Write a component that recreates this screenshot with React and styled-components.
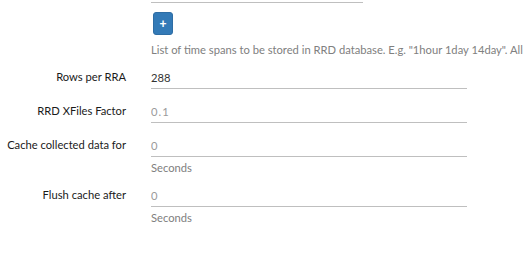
import React from "react";
import styled, { createGlobalStyle } from "styled-components";

const GlobalStyle = createGlobalStyle`
  html, body {
    margin: 0;
    padding: 0;
    background: #fff;
    overflow: hidden;
  }
  body {
    font-family: Lato, "Liberation Sans", sans-serif;
    font-size: 11.2px;
    color: #333;
  }
`;

const Form = styled.div`
  display: grid;
  grid-template-columns: 126px 316px;
  column-gap: 25px;
  width: 529px;
  margin-top: -20px;
`;

const Label = styled.label`
  text-align: right;
  line-height: 22px;
  color: #1a1a1a;
  white-space: nowrap;
`;

const Field = styled.div`
  display: flex;
  flex-direction: column;
  align-items: flex-start;
  margin-bottom: ${p => p.gap ?? 11}px;
  min-width: 0;
`;

const Input = styled.input`
  box-sizing: border-box;
  width: ${p => p.width ?? 316}px;
  height: 23px;
  padding: 0;
  border: 0;
  border-bottom: 1px solid #bfbfbf;
  font: inherit;
  color: #333;
  outline: none;
  background: transparent;

  &::placeholder {
    color: #9a9a9a;
    letter-spacing: ${p => p.spaced ? "1px" : "0"};
  }
`;

const AddButton = styled.button`
  margin: 9px 0 0 2px;
  width: 20px;
  height: 23px;
  padding: 0;
  border: 1px solid #2e6da4;
  border-radius: 3px;
  background: #337ab7;
  color: #fff;
  font: bold 12px "Liberation Sans", sans-serif;
  line-height: 18px;
  vertical-align: top;
`;

const Help = styled.div`
  margin-top: ${p => p.top ?? 2}px;
  color: #808080;
  white-space: nowrap;
  line-height: 17px;
`;

export default function App() {
  return (
    <>
      <GlobalStyle />
      <Form>
        <span />
        <Field gap={8}>
          <Input width={212} />
          <AddButton>+</AddButton>
          <Help top={6}>
            List of time spans to be stored in RRD database. E.g. "1hour 1day 14day". All
          </Help>
        </Field>

        <Label>Rows per RRA</Label>
        <Field>
          <Input defaultValue="288" />
        </Field>

        <Label>RRD XFiles Factor</Label>
        <Field>
          <Input placeholder="0.1" spaced />
        </Field>

        <Label>Cache collected data for</Label>
        <Field gap={8}>
          <Input placeholder="0" />
          <Help>Seconds</Help>
        </Field>

        <Label>Flush cache after</Label>
        <Field>
          <Input placeholder="0" />
          <Help>Seconds</Help>
        </Field>
      </Form>
    </>
  );
}
